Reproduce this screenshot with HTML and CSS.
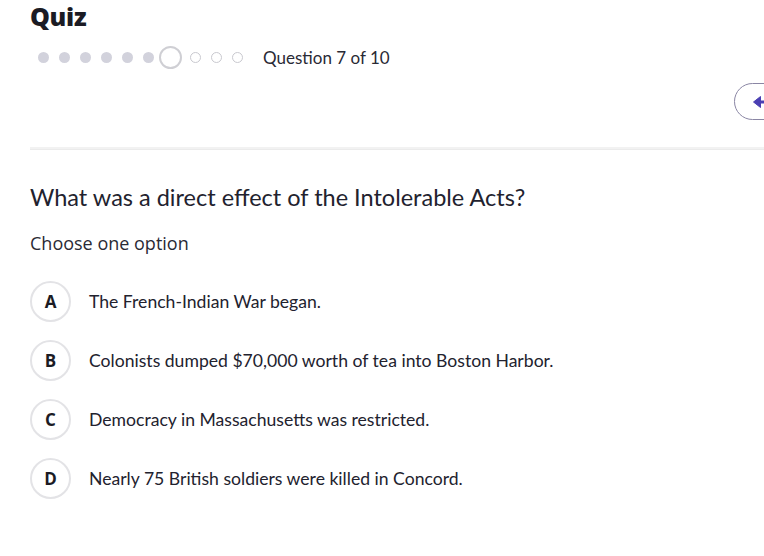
FILE: index.html
```html
<!DOCTYPE html>
<html lang="en">
<head>
    <meta charset="UTF-8">
    <meta name="viewport" content="width=device-width, initial-scale=1.0">
    <title>Quiz</title>
    <link rel="stylesheet" href="styles.css">
</head>
<body>
    <div class="page">
        <h1 class="title">Quiz</h1>

        <div class="progress">
            <div class="steps">
                <span class="step done"></span>
                <span class="step done"></span>
                <span class="step done"></span>
                <span class="step done"></span>
                <span class="step done"></span>
                <span class="step done"></span>
                <span class="step current"></span>
                <span class="step"></span>
                <span class="step"></span>
                <span class="step"></span>
            </div>
            <span class="progress-label">Question 7 of 10</span>
        </div>

        <div class="toolbar">
            <button class="back-button" aria-label="Previous question">
                <svg viewBox="0 0 18 16" width="18" height="16">
                    <path d="M17 8H6" stroke="currentColor" stroke-width="3" stroke-linecap="round"/>
                    <path d="M8.5 2.5L1.5 8l7 5.5z" fill="currentColor" stroke="currentColor" stroke-width="1" stroke-linejoin="round"/>
                </svg>
            </button>
        </div>

        <hr class="divider">

        <h2 class="question">What was a direct effect of the Intolerable Acts?</h2>
        <p class="hint">Choose one option</p>

        <ul class="options">
            <li class="option"><span class="letter">A</span><span class="answer">The French-Indian War began.</span></li>
            <li class="option"><span class="letter">B</span><span class="answer">Colonists dumped $70,000 worth of tea into Boston Harbor.</span></li>
            <li class="option"><span class="letter">C</span><span class="answer">Democracy in Massachusetts was restricted.</span></li>
            <li class="option"><span class="letter">D</span><span class="answer">Nearly 75 British soldiers were killed in Concord.</span></li>
        </ul>
    </div>
</body>
</html>
```

FILE: styles.css
```css
* {
    margin: 0;
    padding: 0;
    box-sizing: border-box;
}

html,
body {
    overflow: hidden;
}

body {
    font-family: Lato, "Open Sans", sans-serif;
    background: #ffffff;
    color: #22222e;
}

.page {
    padding: 2px 0 0 30px;
}

.title {
    font-family: "Open Sans", sans-serif;
    font-weight: 800;
    font-size: 25px;
    line-height: 28px;
    color: #1b1b24;
    letter-spacing: -0.3px;
}

.progress {
    display: flex;
    align-items: center;
    margin-top: 15px;
    height: 24px;
}

.steps {
    display: flex;
    align-items: center;
    gap: 10px;
    margin-left: 8px;
}

.step {
    width: 11px;
    height: 11px;
    border-radius: 50%;
    border: 1.5px solid #c9c9cf;
    background: #ffffff;
}

.step.done {
    border: none;
    background: #d2d2dc;
}

.step.current {
    width: 23px;
    height: 23px;
    margin: 0 -2px 0 -5px;
    border: 2px solid #cfcfd4;
}

.progress-label {
    margin-left: 20px;
    font-size: 17px;
    color: #2a2a35;
}

.toolbar {
    display: flex;
    justify-content: flex-end;
    margin-top: 14px;
    margin-right: -60px;
}

.back-button {
    display: flex;
    align-items: center;
    width: 90px;
    height: 37px;
    padding-left: 17px;
    border: 1.5px solid #8a86a4;
    border-radius: 19px;
    background: #ffffff;
    color: #4a3fb3;
}

.divider {
    margin-top: 27px;
    border: none;
    height: 3px;
    background: #f2f2f2;
    border-bottom: 1px solid #ebebeb;
}

.question {
    margin-top: 32px;
    font-weight: 400;
    font-size: 23.5px;
    line-height: 30px;
    color: #22222e;
}

.hint {
    margin-top: 20px;
    font-family: "Open Sans", sans-serif;
    font-size: 18px;
    line-height: 22px;
    color: #2a2a35;
}

.options {
    list-style: none;
    margin-top: 27px;
    display: flex;
    flex-direction: column;
    gap: 18px;
}

.option {
    display: flex;
    align-items: center;
    gap: 18px;
}

.letter {
    display: flex;
    align-items: center;
    justify-content: center;
    width: 41px;
    height: 41px;
    border-radius: 50%;
    border: 2px solid #e3e3e6;
    font-family: "Open Sans", sans-serif;
    font-weight: 700;
    font-size: 17px;
    color: #1b1b24;
}

.answer {
    font-size: 17.6px;
    color: #22222e;
}
```
